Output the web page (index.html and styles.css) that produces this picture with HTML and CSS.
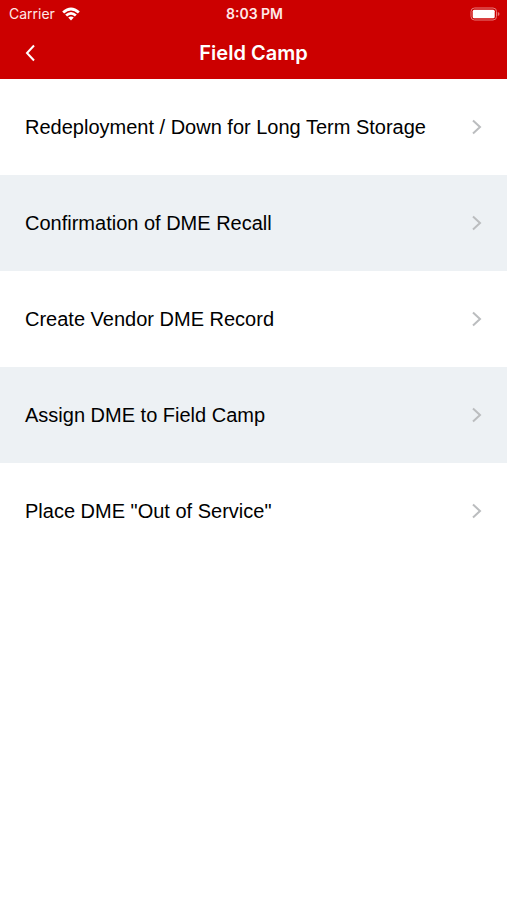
FILE: index.html
```html
<!DOCTYPE html>
<html lang="en">
<head>
<meta charset="utf-8">
<meta name="viewport" content="width=device-width, initial-scale=1">
<title>Field Camp</title>
<link rel="stylesheet" href="styles.css">
</head>
<body>
<header class="header">
  <div class="status">
    <div class="status-left">
      <span>Carrier</span>
      <svg class="wifi" viewBox="0 0 18 14" aria-hidden="true"><path d="M0.2 4.4Q9-3.400 17.800 4.400L15.900 6.400Q9 .4 2.100 6.400ZM3.200 7.500Q9 2.500 14.800 7.500L12.900 9.500Q9 6.200 5.100 9.500ZM6.200 10.600Q9 8.400 11.800 10.600L9 13.500Z"/></svg>
    </div>
    <span class="time">8:03 PM</span>
    <svg class="battery" viewBox="0 0 30 14" aria-hidden="true"><rect class="battery-case" x="1" y="1" width="25.500" height="12" rx="3.500"/><rect x="2.700" y="2.700" width="22" height="8.600" rx="1.500"/><path class="battery-tip" d="M27.800 5Q29.500 5.500 29.500 7T27.800 9Z"/></svg>
  </div>
  <div class="navbar">
    <button class="back" type="button" aria-label="Back"><svg viewBox="0 0 12 18" aria-hidden="true"><path d="M10 1.500L3 9L10 16.500"/></svg></button>
    <h1 class="title">Field Camp</h1>
  </div>
</header>
<main>
  <ul class="menu">
    <li><a class="row" href="#redeployment"><span>Redeployment / Down for Long Term Storage</span><svg class="chevron" viewBox="0 0 12 18" aria-hidden="true"><path d="M2 2.500L9 9L2 15.500"/></svg></a></li>
    <li><a class="row" href="#recall"><span>Confirmation of DME Recall</span><svg class="chevron" viewBox="0 0 12 18" aria-hidden="true"><path d="M2 2.500L9 9L2 15.500"/></svg></a></li>
    <li><a class="row" href="#vendor"><span>Create Vendor DME Record</span><svg class="chevron" viewBox="0 0 12 18" aria-hidden="true"><path d="M2 2.500L9 9L2 15.500"/></svg></a></li>
    <li><a class="row" href="#assign"><span>Assign DME to Field Camp</span><svg class="chevron" viewBox="0 0 12 18" aria-hidden="true"><path d="M2 2.500L9 9L2 15.500"/></svg></a></li>
    <li><a class="row" href="#service"><span>Place DME "Out of Service"</span><svg class="chevron" viewBox="0 0 12 18" aria-hidden="true"><path d="M2 2.500L9 9L2 15.500"/></svg></a></li>
  </ul>
</main>
</body>
</html>
```

FILE: styles.css
```css
* { box-sizing: border-box; }

body {
  margin: 0;
  background: #fff;
  color: #000;
  font-family: "Liberation Sans", Arial, sans-serif;
}

.header {
  background: #cc0000;
  color: #fff;
}

.status {
  display: grid;
  grid-template-columns: 1fr auto 1fr;
  align-items: center;
  height: 27px;
  padding: 0 7px 0 9px;
  font: 14px/20px Inter, sans-serif;
}

.status-left {
  display: flex;
  align-items: center;
  gap: 7px;
  color: #ffe8e8;
}

.status svg { fill: #fff; }
.wifi { width: 18px; height: 14px; }
.time { font-weight: 600; color: #ffe8e8; }
.battery { width: 30px; height: 14px; justify-self: end; }
.status .battery-case { fill: none; stroke: #e67a7a; }
.status .battery-tip { fill: #e67a7a; }

.navbar {
  display: grid;
  grid-template-columns: 60px 1fr 60px;
  align-items: center;
  height: 52px;
}

.back {
  display: flex;
  align-items: center;
  justify-content: center;
  height: 44px;
  padding: 0;
  border: 0;
  background: none;
  color: inherit;
}

.back svg, .chevron {
  width: 12px;
  height: 18px;
  flex: none;
  fill: none;
  stroke: currentColor;
  stroke-width: 2;
}

.title {
  margin: 0;
  font: 600 20px/24px Inter, sans-serif;
  text-align: center;
}

.menu {
  margin: 0;
  padding: 0;
  list-style: none;
}

.menu li:nth-child(even) { background: #edf1f4; }

.row {
  display: flex;
  align-items: center;
  justify-content: space-between;
  gap: 16px;
  min-height: 96px;
  padding: 0 24px 0 25px;
  color: inherit;
  font-size: 20px;
  line-height: 24px;
  text-decoration: none;
}

.chevron { color: #bbbdbf; }
```
